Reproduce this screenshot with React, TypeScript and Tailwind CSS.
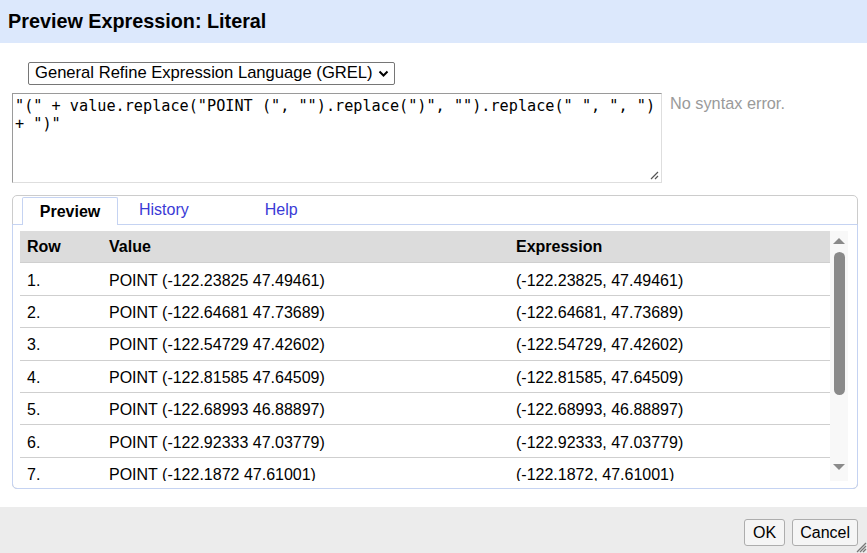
import React from "react";

const rows = [
  ["1.", "POINT (-122.23825 47.49461)", "(-122.23825, 47.49461)"],
  ["2.", "POINT (-122.64681 47.73689)", "(-122.64681, 47.73689)"],
  ["3.", "POINT (-122.54729 47.42602)", "(-122.54729, 47.42602)"],
  ["4.", "POINT (-122.81585 47.64509)", "(-122.81585, 47.64509)"],
  ["5.", "POINT (-122.68993 46.88897)", "(-122.68993, 46.88897)"],
  ["6.", "POINT (-122.92333 47.03779)", "(-122.92333, 47.03779)"],
  ["7.", "POINT (-122.1872 47.61001)", "(-122.1872, 47.61001)"],
];

export default function App() {
  return (
    <div
      className="w-[867px] h-[553px] flex flex-col bg-white text-black overflow-hidden relative"
      style={{ fontFamily: '"Liberation Sans", Arial, sans-serif' }}
    >
      {/* Header */}
      <div className="h-[43px] bg-[#dce8fc] flex items-center px-[8px] shrink-0">
        <span className="text-[19.8px] font-bold leading-none">Preview Expression: Literal</span>
      </div>

      {/* Body */}
      <div className="flex-1 flex flex-col px-[12px] pt-[19px]">
        {/* Select */}
        <div className="pl-[16px]">
          <div className="w-[367px] h-[23px] border border-[#767676] rounded-[2px] flex items-center pl-[6px] pr-[5px] justify-between text-[16.6px] leading-none">
            <span>General Refine Expression Language (GREL)</span>
            <svg width="11" height="8" viewBox="0 0 11 8" className="mt-[1px]">
              <path d="M1.5 1.5 L5.5 5.5 L9.5 1.5" fill="none" stroke="#000" strokeWidth="2" />
            </svg>
          </div>
        </div>

        {/* Textarea row */}
        <div className="flex mt-[8px]">
          <div className="relative w-[650px] h-[90px] border border-t-[#9a9a9a] border-l-[#9a9a9a] border-r-[#dedede] border-b-[#dedede] pl-[2px] pt-[3px]">
            <div
              className="text-[15.2px] leading-[18px] whitespace-pre"
              style={{ fontFamily: '"DejaVu Sans Mono", "Liberation Mono", monospace' }}
            >
              {'"(" + value.replace("POINT (", "").replace(")", "").replace(" ", ", ")\n+ ")"'}
            </div>
            <svg width="10" height="10" viewBox="0 0 10 10" className="absolute right-[2px] bottom-[2px]">
              <path d="M9 2 L2 9 M9 6 L6 9" stroke="#555" strokeWidth="1.2" />
            </svg>
          </div>
          <div className="ml-[8px] mt-[1px] text-[16.3px] text-[#9a9a9a] leading-[18px]">No syntax error.</div>
        </div>

        {/* Tabs panel */}
        <div className="mt-[12px] w-[846px] h-[294px] border border-[#cccccc] rounded-[5px] flex flex-col">
          <div className="h-[28px] flex items-end pl-[9px] shrink-0">
            <div className="w-[96px] h-[28px] border border-b-0 border-[#c5d3f2] bg-white rounded-t-[2px] flex items-center justify-center font-bold text-[16px] relative top-[1px]">
              Preview
            </div>
            <div className="ml-[21px] h-[28px] flex items-center text-[16px] text-[#3a3ad6]">History</div>
            <div className="ml-[76px] h-[28px] flex items-center text-[16px] text-[#3a3ad6]">Help</div>
          </div>
          <div className="flex-1 border-t border-[#c5d3f2] -mx-[1px] -mb-[1px] border-x border-b rounded-b-[5px] px-[7px] pt-[6px]">
            <div className="flex h-[250px] overflow-hidden">
              <div className="w-[810px] flex flex-col text-[16px]">
                <div className="h-[32.4px] bg-[#dcdcdc] border-b border-[#cfcfcf] flex items-center font-bold shrink-0">
                  <div className="w-[82px] pl-[7px]">Row</div>
                  <div className="w-[407px] pl-[7px]">Value</div>
                  <div className="pl-[7px]">Expression</div>
                </div>
                {rows.map((r, i) => (
                  <div
                    key={i}
                    className="h-[32.4px] border-b border-[#cfcfcf] flex items-center shrink-0 pt-[3px]"
                  >
                    <div className="w-[82px] pl-[7px]">{r[0]}</div>
                    <div className="w-[407px] pl-[7px]">{r[1]}</div>
                    <div className="pl-[7px]">{r[2]}</div>
                  </div>
                ))}
              </div>
              {/* Scrollbar */}
              <div className="w-[18px] bg-[#f8f8f8] flex flex-col items-center relative">
                <svg width="12" height="8" viewBox="0 0 12 8" className="mt-[6px]">
                  <path d="M0 7 L6 1 L12 7 Z" fill="#8a8a8a" />
                </svg>
                <div className="mt-[7px] w-[11px] h-[143px] rounded-[6px] bg-[#8a8a8a]" />
                <svg width="12" height="8" viewBox="0 0 12 8" className="absolute bottom-[10px] left-[3px]">
                  <path d="M0 1 L6 7 L12 1 Z" fill="#8a8a8a" />
                </svg>
              </div>
            </div>
          </div>
        </div>
      </div>

      {/* Footer */}
      <div className="h-[46px] bg-[#ececec] shrink-0 flex items-start justify-end pr-[9px] pt-[12px] gap-[7px]">
        <div className="h-[27px] px-[8px] border border-[#adadad] rounded-[3px] bg-[#f5f5f5] flex items-center text-[16px]">OK</div>
        <div className="h-[27px] px-[7px] border border-[#adadad] rounded-[3px] bg-[#f5f5f5] flex items-center text-[16px]">Cancel</div>
      </div>
      <svg width="12" height="12" viewBox="0 0 12 12" className="absolute right-0 bottom-0">
        <path d="M11 2 L2 11 M11 5 L5 11 M11 8 L8 11" stroke="#777" strokeWidth="1.3" />
      </svg>
    </div>
  );
}
